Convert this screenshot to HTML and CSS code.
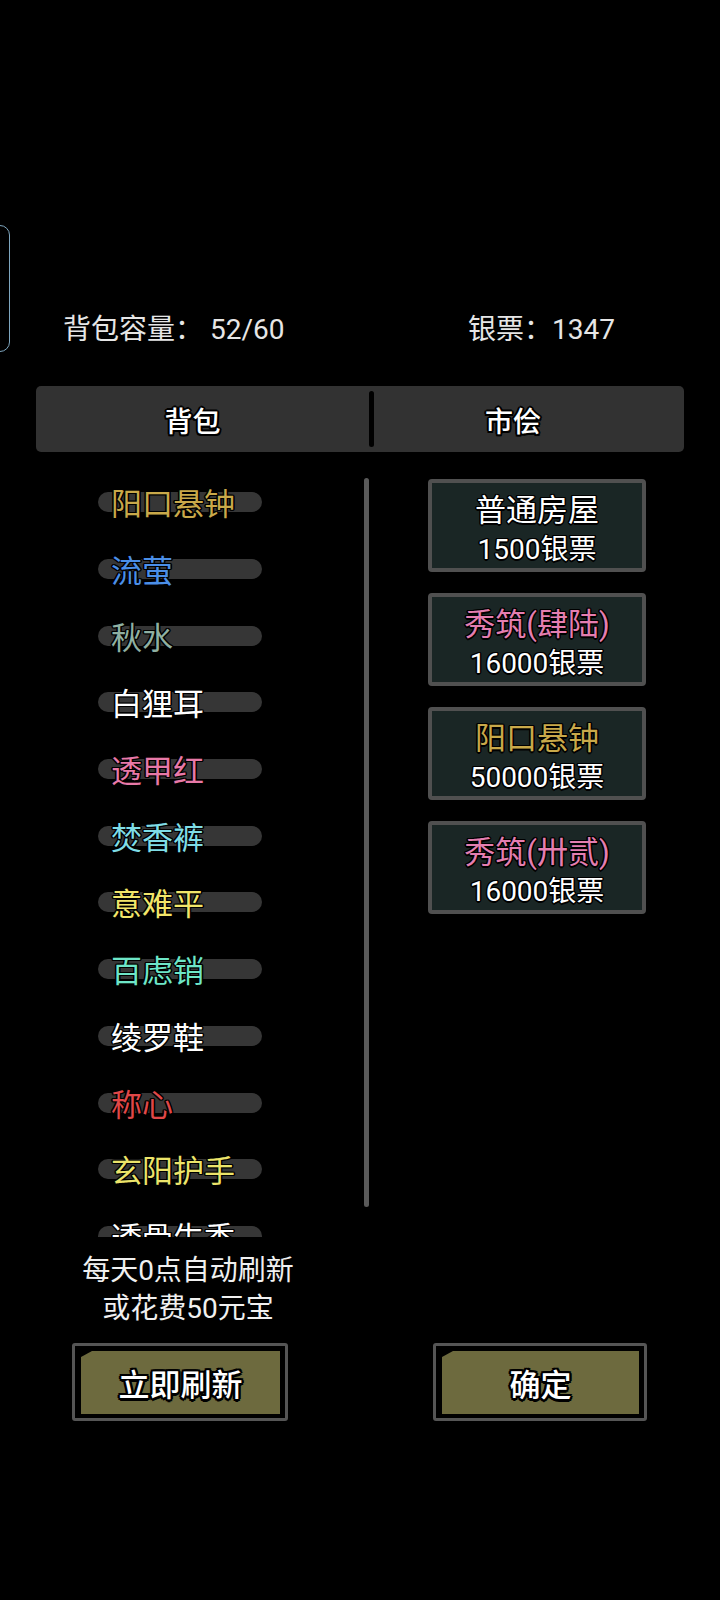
FILE: index.html
```html
<!DOCTYPE html>
<html lang="zh-CN">
<head>
<meta charset="utf-8">
<title>背包 · 市侩</title>
<link rel="stylesheet" href="styles.css">
</head>
<body>
<div class="side-tab"></div>
<div class="page">
  <div class="stats">
    <span class="stat">背包容量： 52/60</span>
    <span class="stat">银票：1347</span>
  </div>

  <div class="tabs">
    <div class="tab tab-left">背包</div>
    <div class="tab-divider"></div>
    <div class="tab tab-right">市侩</div>
  </div>

  <div class="content">
    <div class="bag">
      <div class="list">
        <div class="row"><span class="pill"></span><span class="name c-gold">阳口悬钟</span></div>
        <div class="row"><span class="pill"></span><span class="name c-blue">流萤</span></div>
        <div class="row"><span class="pill"></span><span class="name c-sage">秋水</span></div>
        <div class="row"><span class="pill"></span><span class="name c-white">白狸耳</span></div>
        <div class="row"><span class="pill"></span><span class="name c-pink">透甲红</span></div>
        <div class="row"><span class="pill"></span><span class="name c-cyan">焚香裤</span></div>
        <div class="row"><span class="pill"></span><span class="name c-yellow">意难平</span></div>
        <div class="row"><span class="pill"></span><span class="name c-aqua">百虑销</span></div>
        <div class="row"><span class="pill"></span><span class="name c-white">绫罗鞋</span></div>
        <div class="row"><span class="pill"></span><span class="name c-red">称心</span></div>
        <div class="row"><span class="pill"></span><span class="name c-lemon">玄阳护手</span></div>
        <div class="row"><span class="pill"></span><span class="name c-white">透骨生香</span></div>
      </div>
      <div class="scrollbar"></div>
    </div>

    <div class="shop">
      <div class="card">
        <div class="card-title c-white">普通房屋</div>
        <div class="card-price">1500银票</div>
      </div>
      <div class="card">
        <div class="card-title c-rose">秀筑(肆陆)</div>
        <div class="card-price">16000银票</div>
      </div>
      <div class="card">
        <div class="card-title c-gold">阳口悬钟</div>
        <div class="card-price">50000银票</div>
      </div>
      <div class="card">
        <div class="card-title c-rose">秀筑(卅贰)</div>
        <div class="card-price">16000银票</div>
      </div>
    </div>
  </div>

  <div class="note">
    <div>每天0点自动刷新</div>
    <div>或花费50元宝</div>
  </div>

  <div class="actions">
    <div class="btn btn-refresh"><div class="btn-face">立即刷新</div></div>
    <div class="btn btn-ok"><div class="btn-face">确定</div></div>
  </div>
</div>
</body>
</html>
```

FILE: styles.css
```css
* { box-sizing: border-box; }

html, body {
  margin: 0;
  padding: 0;
  background: #000;
}

body {
  width: 720px;
  height: 1600px;
  overflow: hidden;
  position: relative;
  font-family: Roboto, "Noto Sans CJK SC", "Noto Sans", sans-serif;
  color: #e8e8e8;
}

.side-tab {
  position: absolute;
  left: -20px;
  top: 225px;
  width: 30px;
  height: 127px;
  border: 1.5px solid #7ea6bf;
  border-radius: 10px;
}

.page {
  padding: 310px 36px 0 36px;
}

/* stats row */
.stats {
  display: grid;
  grid-template-columns: 405px auto;
  padding-left: 27px;
  height: 40px;
  line-height: 40px;
  font-size: 28px;
}
.stat { white-space: pre; color: #e6e6e6; }

/* tabs */
.tabs {
  margin-top: 36px;
  height: 66px;
  background: #323232;
  border-radius: 5px;
  display: flex;
  align-items: center;
}
.tab {
  height: 66px;
  padding-top: 8px;
  display: flex;
  align-items: center;
  justify-content: center;
  font-size: 28px;
  line-height: 40px;
  font-weight: 500;
  color: #fff;
  text-shadow:
    2px 0 0 #000, -2px 0 0 #000, 0 2px 0 #000, 0 -2px 0 #000,
    1.5px 1.5px 0 #000, -1.5px 1.5px 0 #000, 1.5px -1.5px 0 #000, -1.5px -1.5px 0 #000;
}
.tab-left { width: 333px; padding-right: 20px; }
.tab-right { flex: 1; padding-right: 32px; }
.tab-divider {
  width: 5px;
  height: 56px;
  background: #000;
  border-radius: 3px;
}

/* content */
.content {
  margin-top: 17px;
  display: flex;
  align-items: flex-start;
}

.bag {
  display: flex;
  align-items: flex-start;
  width: 333px;
}
.list {
  width: 328px;
  height: 768px;
  overflow: hidden;
  padding-left: 62px;
}
.row {
  height: 66.7px;
  display: grid;
  align-items: center;
}
.pill, .name { grid-area: 1 / 1; }
.pill {
  width: 164px;
  height: 20px;
  border-radius: 10px;
  background: #363636;
}
.name {
  margin-left: 13px;
  margin-top: 6px;
  font-size: 31px;
  line-height: 40px;
  white-space: nowrap;
  position: relative;
  text-shadow:
    1.4px 0 0 #000, -1.4px 0 0 #000, 0 1.4px 0 #000, 0 -1.4px 0 #000,
    1px 1px 0 #000, -1px 1px 0 #000, 1px -1px 0 #000, -1px -1px 0 #000;
}
.scrollbar {
  margin-top: 9px;
  width: 5px;
  height: 729px;
  border-radius: 3px;
  background: #5a5a5a;
}

.c-gold { color: #c9a94a; }
.c-blue { color: #4b8fe8; }
.c-sage { color: #8fb0a2; }
.c-white { color: #ffffff; }
.c-pink { color: #e879a8; }
.c-cyan { color: #7fdde6; }
.c-yellow { color: #f2e66a; }
.c-aqua { color: #6ee6c8; }
.c-red { color: #e04848; }
.c-lemon { color: #ece46a; }
.c-rose { color: #e47eb0; }

/* shop */
.shop {
  margin-left: 59px;
  margin-top: 10px;
  display: flex;
  flex-direction: column;
  gap: 21px;
}
.card {
  width: 218px;
  height: 93px;
  border: 4px solid #505050;
  border-radius: 4px;
  background: #1a2625;
  padding-top: 11px;
  text-align: center;
  text-shadow:
    1.5px 0 0 #000, -1.5px 0 0 #000, 0 1.5px 0 #000, 0 -1.5px 0 #000,
    1px 1px 0 #000, -1px 1px 0 #000, 1px -1px 0 #000, -1px -1px 0 #000;
}
.card-title {
  font-size: 31px;
  line-height: 34px;
  white-space: nowrap;
}
.card-price {
  margin-top: 5px;
  font-size: 28px;
  line-height: 34px;
  color: #fff;
  white-space: nowrap;
}

/* note */
.note {
  margin-top: 15px;
  width: 304px;
  text-align: center;
  font-size: 28px;
  line-height: 38px;
  color: #f0f0f0;
}

/* buttons */
.actions {
  margin-top: 15px;
  padding-left: 36px;
  display: flex;
  gap: 145px;
}
.btn {
  height: 78px;
  border: 3px solid #555;
  border-radius: 3px;
  background: #000;
  padding: 5px 5px 4px 6px;
}
.btn-refresh { width: 216px; }
.btn-ok { width: 214px; }
.btn-face {
  height: 100%;
  background: #6d6a3e;
  clip-path: polygon(0 6px, 11px 0, 100% 0, 100% 100%, 0 100%);
  display: flex;
  align-items: center;
  justify-content: center;
  font-size: 31px;
  font-weight: 500;
  color: #fff;
  text-shadow:
    2.5px 0 0 #000, -2.5px 0 0 #000, 0 2.5px 0 #000, 0 -2.5px 0 #000,
    1.8px 1.8px 0 #000, -1.8px 1.8px 0 #000, 1.8px -1.8px 0 #000, -1.8px -1.8px 0 #000;
}
```
